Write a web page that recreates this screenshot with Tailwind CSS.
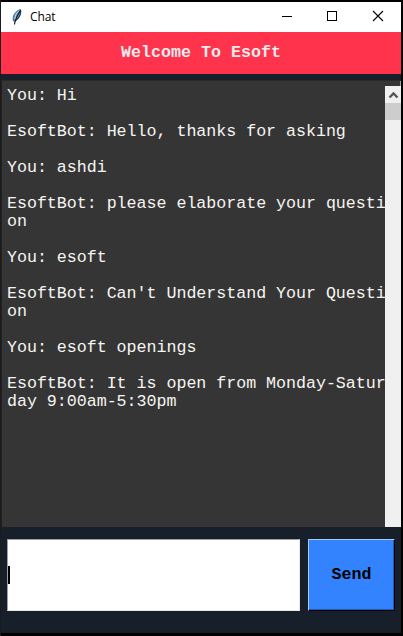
<!DOCTYPE html>
<html lang="en">
<head>
<meta charset="utf-8">
<title>Chat</title>
<script src="https://cdn.jsdelivr.net/npm/@tailwindcss/browser@4"></script>
</head>
<body class="w-[403px] h-[636px] overflow-hidden bg-black">
<div class="w-[403px] h-[636px] border-l border-[#1b1b1b] border-r-2 border-r-black pt-[2px] flex flex-col">
  <header class="h-[30px] shrink-0 bg-white flex items-center text-black">
    <svg class="ml-[9px] w-[14px] h-[18px]" viewBox="0 0 14 18" fill="none">
      <path d="M3.500 13C2 9 5 3 10.500 1.500c1 4-1 9-5 11.500z" fill="#5b9bd8" stroke="#4b5563" stroke-width=".9"/>
      <path d="M5 11C5 7 7 4 9 3" stroke="#b9dcf8" stroke-width="1"/>
      <path d="M10 3C7 8 5 12 4.500 16.500" stroke="#101010" stroke-width="1.1"/>
      <path d="M10.500 2C11 6 9 10 6 12" stroke="#1e2a3a" stroke-width="1"/>
    </svg>
    <span class="ml-[6px] text-[12px] leading-[16px] font-['Open_Sans','Noto_Sans',sans-serif] tracking-[-0.1px]">Chat</span>
    <div class="ml-auto -mr-px flex items-center">
      <svg class="w-[46px] h-[30px]" viewBox="0 0 46 30" fill="none" stroke="#000" shape-rendering="crispEdges"><path d="M18 14.500h10"/></svg>
      <svg class="w-[46px] h-[30px]" viewBox="0 0 46 30" fill="none" stroke="#000" shape-rendering="crispEdges"><path d="M17.500 9.500h9v9h-9z"/></svg>
      <svg class="w-[46px] h-[30px]" viewBox="0 0 46 30" fill="none" stroke="#000" stroke-width="1.1"><path d="M17 9l10 10M27 9L17 19"/></svg>
    </div>
  </header>
  <h1 class="h-[42px] shrink-0 bg-[#ff334b] text-[#eaecee] text-center font-bold text-[16.67px] leading-[41px] font-['Liberation_Mono',monospace]">Welcome To Esoft</h1>
  <div class="h-[6px] shrink-0 bg-[#17202a]"></div>
  <main class="h-[447px] shrink-0 bg-[#353535] border-l border-l-[#202020] border-t border-t-[#292929] flex">
    <div class="w-[383px] shrink-0 pl-[5px] pt-[6px] whitespace-pre text-[#f5f5f2] text-[16.67px] leading-[18px] tracking-[-0.03px] font-['Liberation_Mono',monospace]">You: Hi

EsoftBot: Hello, thanks for asking

You: ashdi

EsoftBot: please elaborate your questi
on

You: esoft

EsoftBot: Can't Understand Your Questi
on

You: esoft openings

EsoftBot: It is open from Monday-Satur
day 9:00am-5:30pm</div>
    <div class="w-4 shrink-0 flex flex-col">
      <div class="h-[5px] ml-auto w-px bg-[#a0a0a0]"></div>
      <div class="grow bg-[#f0f0f0]">
        <svg class="w-4 h-[17px] block" viewBox="0 0 16 17" fill="none"><path d="M4.500 11.500L8.500 7.500l4 4" stroke="#555" stroke-width="2.3"/></svg>
        <div class="h-[17px] bg-[#cdcdcd]"></div>
      </div>
    </div>
  </main>
  <footer class="h-[105px] shrink-0 bg-[#17202a] flex pl-[6px] pt-[12px] gap-[8px]">
    <div class="w-[293px] h-[72px] bg-white border border-t-[#a0a0a0] border-l-[#a0a0a0] border-r-[#e8e8e8] border-b-[#e8e8e8] flex items-center"><div class="w-[2px] h-[18px] bg-black"></div></div>
    <button class="w-[87px] h-[72px] bg-[#3383ff] border-t border-l border-t-[#a5c8ff] border-l-[#a5c8ff] border-r border-b border-r-black border-b-black shadow-[inset_-1px_-1px_0_#235bb2] text-black text-[16.67px] leading-[18px] font-bold font-['Liberation_Mono',monospace]">Send</button>
  </footer>
  <div class="h-px bg-[#1b1b1b]"></div>
</div>
</body>
</html>
